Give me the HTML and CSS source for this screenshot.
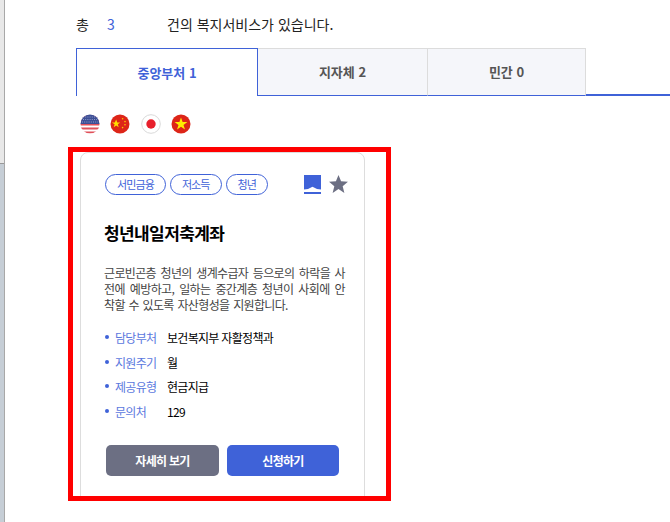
FILE: index.html
```html
<!DOCTYPE html>
<html lang="ko">
<head>
<meta charset="utf-8">
<title>복지서비스</title>
<link rel="stylesheet" href="styles.css">
</head>
<body>
<div class="page">
  <div class="edge"><div class="edge-top"></div><div class="edge-bottom"></div></div>
  <main class="main">
    <p class="count"><span class="count-a">총</span><span class="count-n">3</span><span>건의 복지서비스가 있습니다.</span></p>
    <div class="tabs">
      <div class="tab tab-on">중앙부처 1</div>
      <div class="tab tab-2">지자체 2</div>
      <div class="tab tab-3">민간 0</div>
      <div class="tab-rest"></div>
    </div>
    <div class="flags">
      <svg class="flag" viewBox="0 0 20 20"><defs><clipPath id="c1"><circle cx="10" cy="10" r="9.5"/></clipPath></defs><g clip-path="url(#c1)"><rect width="20" height="20" fill="#fff"/><path d="M0 1.5h20v2H0zM0 5.5h20v2H0zM0 9.5h20v2H0zM0 13.5h20v2H0zM0 17.5h20v2H0z" fill="#e0505a"/><rect width="20" height="10" fill="#3d4f96"/><path d="M3 3h14M3 5.5h14M2 8h16" stroke="#9aa5cf" stroke-width=".9" stroke-dasharray="1 1.2"/></g></svg>
      <svg class="flag" viewBox="0 0 20 20"><circle cx="10" cy="10" r="9.5" fill="#dd2518"/><path d="M6.2 5.6l1 2.9h3l-2.4 1.8.9 2.9-2.5-1.8-2.5 1.8.9-2.9L1.8 8.500h3z" fill="#ffe000"/><circle cx="12.600" cy="4.800" r=".8" fill="#ffc800"/><circle cx="15" cy="7.600" r=".8" fill="#ffc800"/><circle cx="15" cy="10.800" r=".8" fill="#ffc800"/><circle cx="12.600" cy="13.600" r=".8" fill="#ffc800"/></svg>
      <svg class="flag" viewBox="0 0 20 20"><circle cx="10" cy="10" r="9.300" fill="#fff" stroke="#d9d9d9"/><circle cx="10" cy="10" r="4.700" fill="#e8202c"/></svg>
      <svg class="flag" viewBox="0 0 20 20"><circle cx="10" cy="10" r="9.500" fill="#dd2518"/><path d="M10 3.400l1.600 4.600h4.800l-3.900 2.900 1.500 4.700-4-2.900-4 2.900 1.500-4.700L3.600 8h4.800z" fill="#ffee00"/></svg>
    </div>
    <section class="mark">
      <article class="card">
        <div class="card-top">
          <ul class="tags">
            <li class="tag">서민금융</li>
            <li class="tag">저소득</li>
            <li class="tag">청년</li>
          </ul>
          <div class="actions">
            <svg class="bookmark" viewBox="0 0 17 19"><path d="M0 0h17v14.500l-4-.5-4.500-2.300L4 14l-4 .5z" fill="#3f62d8"/><rect y="17" width="17" height="2" fill="#3f62d8"/></svg>
            <svg class="star" viewBox="0.5 0.8 19 18.100"><path d="M10 .8l2.600 6.400 6.900.5-5.300 4.400 1.700 6.800L10 15l-5.900 3.900 1.700-6.800L.5 7.700l6.900-.5z" fill="#6c6f83"/></svg>
          </div>
        </div>
        <h2 class="title">청년내일저축계좌</h2>
        <p class="desc">근로빈곤층 청년의 생계수급자 등으로의 하락을 사전에 예방하고, 일하는 중간계층 청년이 사회에 안착할 수 있도록 자산형성을 지원합니다.</p>
        <dl class="info">
          <div class="row"><dt>담당부처</dt><dd>보건복지부 자활정책과</dd></div>
          <div class="row"><dt>지원주기</dt><dd>월</dd></div>
          <div class="row"><dt>제공유형</dt><dd>현금지급</dd></div>
          <div class="row"><dt>문의처</dt><dd>129</dd></div>
        </dl>
        <div class="buttons">
          <div class="btn btn-gray">자세히 보기</div>
          <div class="btn btn-blue">신청하기</div>
        </div>
      </article>
    </section>
  </main>
</div>
</body>
</html>
```
FILE: styles.css
```css
* { box-sizing: border-box; }
html, body { margin: 0; padding: 0; background: #fff; }
body { font-family: "Noto Sans CJK KR", "Noto Sans", sans-serif; color: #222; overflow: hidden; }
.page { display: flex; width: 670px; height: 522px; }
.edge { width: 5px; display: flex; flex-direction: column; border-right: 1px solid #a8a8a8; }
.edge-top { height: 164px; background: #e8e8e8; border-bottom: 1px solid #999; }
.edge-bottom { flex: 1; background: #c6ced6; }
.main { flex: 1; padding: 14px 0 0 71px; min-width: 0; }
.count { margin: 0; height: 34px; font-size: 14px; line-height: 20px; display: flex; color: #222; }
.count-a { width: 31px; }
.count-n { width: 60px; color: #3f62d8; }
.tabs { display: flex; height: 48px; }
.tab { display: flex; align-items: center; justify-content: center; font-size: 13px; font-weight: 700; color: #555; background: #f5f6fa; border: 1px solid #dcdcdc; border-left: 0; border-bottom: 1px solid #3f62d8; padding-bottom: 1px; }
.tab-on { width: 182px; color: #3f62d8; background: #fff; border: 1px solid #3f62d8; border-bottom: 0; }
.tab-2 { width: 170px; }
.tab-3 { width: 158px; }
.tab-rest { flex: 1; border-bottom: 2px solid #3f62d8; }
.flags { display: flex; gap: 10.400px; padding: 18px 0 0 4px; height: 51px; }
.flag { width: 20px; height: 20px; flex: none; }
.mark { width: 323px; height: 354px; margin-left: -8px; border: 5px solid #f00; padding: 0 21px 0 7px; overflow: hidden; }
.card { width: 285px; height: 360px; background: #fff; border: 1px solid #ddd; border-radius: 8px; padding: 21px 16px 0 23px; }
.card-top { display: flex; justify-content: space-between; align-items: flex-start; }
.tags { display: flex; gap: 4px; margin: 0; padding: 0 0 0 1px; list-style: none; }
.tag { height: 21px; padding: 0 11px; border: 1px solid #3f62d8; border-radius: 11px; font-size: 11px; letter-spacing: -.9px; line-height: 18px; color: #3f62d8; }
.actions { display: flex; gap: 8px; margin-top: 1px; }
.bookmark { width: 17px; height: 19px; }
.star { width: 19px; height: 18px; }
.title { margin: 25px 0 0; font-size: 17px; line-height: 26px; font-weight: 700; color: #000; letter-spacing: -.6px; }
.desc { width: 241px; margin: 19px 0 0; font-size: 12px; line-height: 16px; color: #444; letter-spacing: -.65px; word-spacing: 1px; word-break: break-all; text-align: justify; }
.info { margin: 12px 0 0; }
.row { display: flex; height: 24.700px; align-items: center; font-size: 12px; letter-spacing: -.7px; position: relative; padding-left: 10px; margin-left: 1px; }
.row::before { content: ""; position: absolute; left: 0; top: 10px; width: 4px; height: 4px; border-radius: 50%; background: #3f62d8; }
dt { width: 52px; color: #5b78de; }
dd { margin: 0; color: #000; }
.buttons { display: flex; gap: 8px; margin-top: 21px; padding-left: 2px; }
.btn { width: 113px; height: 31px; border-radius: 5px; color: #fff; font-size: 12px; letter-spacing: -.7px; font-weight: 700; display: flex; align-items: center; justify-content: center; }
.btn-gray { background: #6c6f83; }
.btn-blue { width: 112px; background: #3f62d8; }
```
